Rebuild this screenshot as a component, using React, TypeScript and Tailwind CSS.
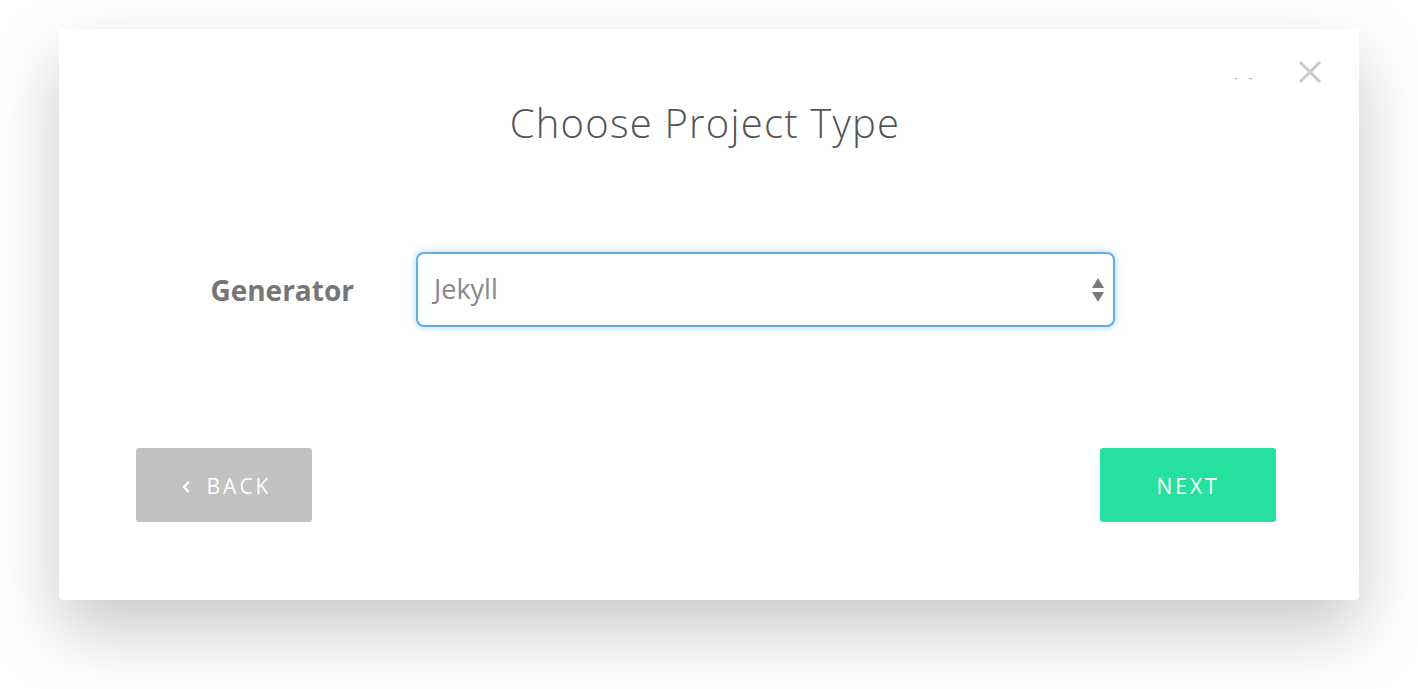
import { ChevronLeft } from "lucide-react";

const font = { fontFamily: '"Open Sans", "Noto Sans", sans-serif' };

export default function App() {
  return (
    <div className="min-h-[689px] w-full bg-white pl-[59px] pt-[29px]" style={font}>
      <div className="relative flex h-[571px] w-[1300px] flex-col rounded-[4px] bg-white shadow-[0_30px_70px_rgba(0,0,0,0.22)]">
        {/* top-right controls */}
        <div className="absolute right-[37px] top-[31px] flex items-start gap-[44px]">
          <svg width="22" height="6" viewBox="0 0 22 6" className="mt-[17px]">
            <path d="M2 1 L6 1 L4 3 Z" fill="#c4c4c4" />
            <path d="M16 1 L21 1 L18.5 3 Z" fill="#c4c4c4" />
          </svg>
          <svg width="24" height="24" viewBox="0 0 24 24">
            <path d="M2 2 L22 22 M22 2 L2 22" stroke="#cbcbcb" strokeWidth="3" />
          </svg>
        </div>

        <h1 className="pr-[8px] pt-[70px] text-center text-[40px] font-light leading-[48px] tracking-[1.2px] text-[#555555]">
          Choose Project Type
        </h1>

        <div className="mt-[105px] flex items-center">
          <label className="w-[357px] pr-[62px] text-right text-[28px] font-bold text-[#767676]">
            Generator
          </label>
          <div className="flex h-[75px] w-[699px] items-center justify-between rounded-[8px] border-2 border-[#62aee9] bg-white pl-[16px] pr-[8px] shadow-[0_0_7px_rgba(98,174,233,0.55)]">
            <span className="text-[27px] text-[#888888]">Jekyll</span>
            <svg width="14" height="28" viewBox="0 0 14 28">
              <path d="M7 2 L13 12 L1 12 Z" fill="#7a7a7a" />
              <path d="M1 16 L13 16 L7 26 Z" fill="#7a7a7a" />
            </svg>
          </div>
        </div>

        <div className="mt-auto mb-[78px] flex justify-between pl-[77px] pr-[83px]">
          <button className="flex h-[74px] w-[176px] items-center justify-center gap-[12px] rounded-[3px] bg-[#c2c2c2] pt-[3px] text-[21px] font-medium tracking-[3px] text-white">
            <ChevronLeft size={18} strokeWidth={3} />
            BACK
          </button>
          <button className="flex h-[74px] w-[176px] items-center justify-center rounded-[3px] bg-[#26e09f] pt-[3px] text-[21px] font-medium tracking-[3px] text-white">
            NEXT
          </button>
        </div>
      </div>
    </div>
  );
}
